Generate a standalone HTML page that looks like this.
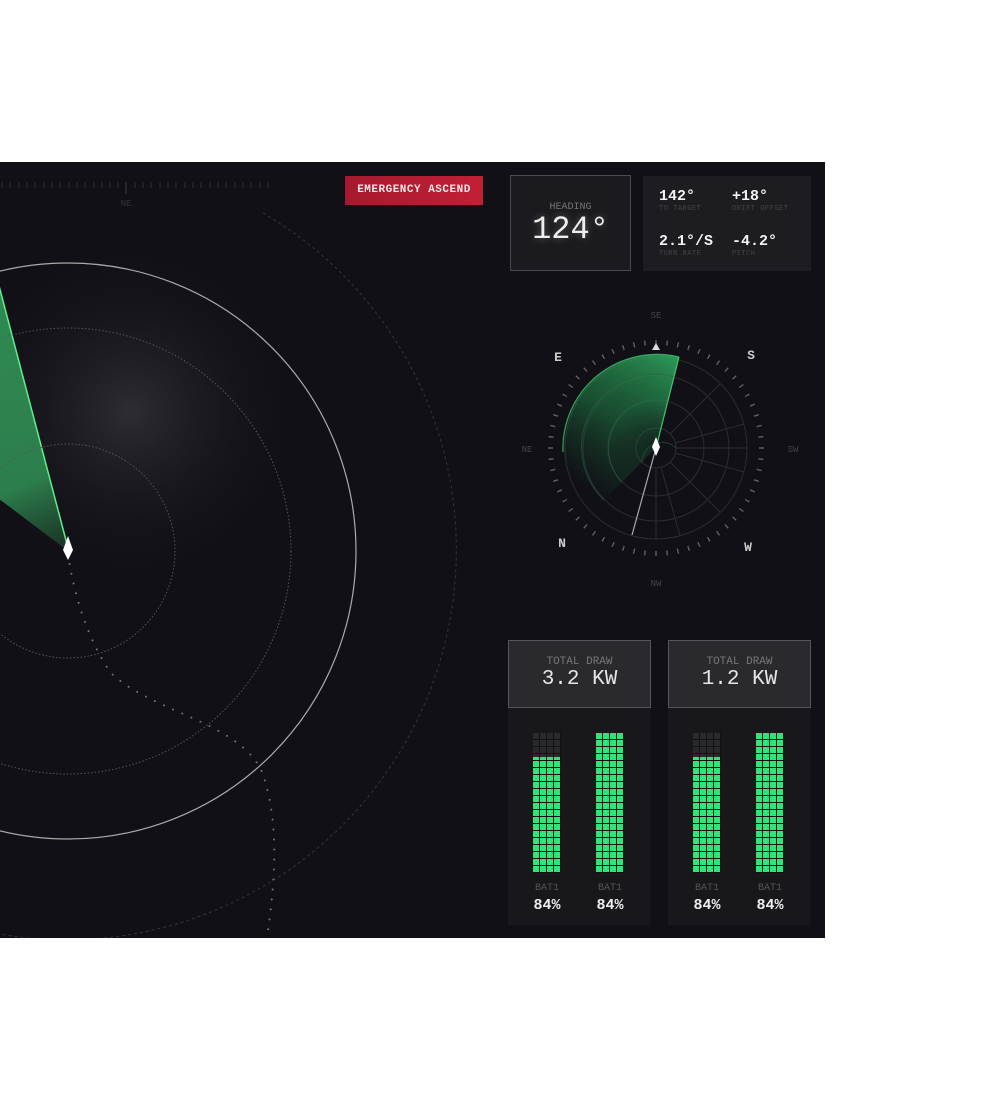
<!DOCTYPE html>
<html><head><meta charset="utf-8"><style>
body{margin:0;width:996px;height:1100px;background:#fff;position:relative;overflow:hidden;font-family:"Liberation Mono",monospace;}
#p{position:absolute;left:0;top:162px;width:825px;height:776px;background:#111016;overflow:hidden}
.abs{position:absolute}
.btn{left:345px;top:14px;width:138px;height:29px;background:linear-gradient(90deg,#a51a2e,#c21f35);color:#f3e6e8;font-size:11px;font-weight:bold;line-height:29px;text-align:center;letter-spacing:0.5px}
.hd{left:510px;top:13px;width:119px;height:94px;border:1px solid #4a4a50;background:#1b1b1f;text-align:center;color:#eee}
.st{left:643px;top:14px;width:168px;height:95px;background:#1d1d21}
.v{color:#f2f2f2;font-size:15px;font-weight:bold}
.l{color:#444;font-size:7px;letter-spacing:.5px}
.card{top:478px;width:143px;height:285px;background:#18181c}
.ch{position:absolute;left:0;top:0;width:141px;height:66px;border:1px solid #55555a;background:#2a2a2e;text-align:center}
.bar{position:absolute;width:28px;height:140px;top:93px;
background:
repeating-linear-gradient(90deg,transparent 0 6px,#111 6px 7px),
repeating-linear-gradient(180deg,transparent 0 6px,#111 6px 7px),
linear-gradient(180deg,#2a2a2e 0 24px,#2ee57a 24px);}
.bar.full{background:repeating-linear-gradient(90deg,transparent 0 6px,#111 6px 7px),repeating-linear-gradient(180deg,transparent 0 6px,#111 6px 7px),#2ee57a}
.bl{position:absolute;top:243px;width:40px;text-align:center;color:#555;font-size:10px}
.bp{position:absolute;top:257px;width:40px;text-align:center;color:#eee;font-size:15px;font-weight:bold}
</style></head><body>
<div id="p">
<svg class="abs" style="left:0;top:0" width="825" height="776">
<defs>
<radialGradient id="glow" cx="130" cy="250" r="180" gradientUnits="userSpaceOnUse"><stop offset="0" stop-color="#2e2d33"/><stop offset="1" stop-color="#111016" stop-opacity="0"/></radialGradient>
<linearGradient id="gw" x1="68" y1="389" x2="-40" y2="150" gradientUnits="userSpaceOnUse"><stop offset="0" stop-color="#2a7a48" stop-opacity="0.3"/><stop offset="0.3" stop-color="#2f8a52" stop-opacity="0.9"/><stop offset="1" stop-color="#2f8a52" stop-opacity="1"/></linearGradient>
<linearGradient id="gc" x1="700" y1="210" x2="600" y2="340" gradientUnits="userSpaceOnUse"><stop offset="0" stop-color="#2ea35c" stop-opacity="0.95"/><stop offset="0.55" stop-color="#207a44" stop-opacity="0.6"/><stop offset="1" stop-color="#1a5a34" stop-opacity="0"/></linearGradient>
<radialGradient id="cfade" cx="656" cy="286" r="94" gradientUnits="userSpaceOnUse"><stop offset="0" stop-color="#fff" stop-opacity="0.3"/><stop offset="0.5" stop-color="#fff" stop-opacity="0.9"/><stop offset="1" stop-color="#fff"/></radialGradient>
<mask id="cm"><rect x="500" y="150" width="320" height="300" fill="url(#cfade)"/></mask>
</defs>
<ellipse cx="150" cy="260" rx="190" ry="170" fill="url(#glow)"/>
<path d="M68 389 L-10 90 L-10 330 Z" fill="url(#gw)"/>
<line x1="68" y1="386" x2="-2" y2="120" stroke="#5cf08e" stroke-width="1.5"/>
<circle cx="68" cy="389" r="107" fill="none" stroke="#555" stroke-dasharray="1.5 2"/>
<circle cx="68" cy="389" r="223" fill="none" stroke="#555" stroke-dasharray="1.5 2"/>
<circle cx="68" cy="389" r="288" fill="none" stroke="#aaa" stroke-width="1.2"/>
<path d="M263 51 A390 390 0 0 1 -65 755" fill="none" stroke="#34343a" stroke-dasharray="3 3"/>
<path d="M68 392 C75 440 90 480 110 510 C150 550 240 560 262 610 C280 660 275 720 267 776" fill="none" stroke="#777" stroke-width="2" stroke-linecap="round" stroke-dasharray="0 10"/>
<path d="M68 374 L73 388 L68 398 L63 388 Z" fill="#fff"/>
<g stroke="#2e2e34" stroke-width="1">
<path d="M2 20v6M10 20v6M19 20v6M27 20v6M35 20v6M44 20v6M52 20v6M60 20v6M69 20v6M77 20v6M85 20v6M94 20v6M102 20v6M110 20v6M118 20v6M135 20v6M143 20v6M151 20v6M160 20v6M168 20v6M176 20v6M185 20v6M193 20v6M201 20v6M210 20v6M218 20v6M226 20v6M235 20v6M243 20v6M251 20v6M260 20v6M268 20v6"/>
<path d="M126 20v12" stroke="#3a3a40"/>
</g>
<text x="126" y="44" fill="#333" font-size="9" text-anchor="middle" font-family="Liberation Mono">NE</text>
<g transform="translate(656,286)">
<g fill="none" stroke="#2c2c30" stroke-width="1">
<circle r="20"/><circle r="48"/><circle r="73"/><circle r="91"/>
<path d="M20 0H91M0 20V91M14 14L64 64M14 -14L64 -64M19 5L88 24M19 -5L88 -24M5 19L24 88"/>
</g>
</g>
<path d="M656 286 L679 195 A94 94 0 0 0 590 352 Z" fill="url(#gc)" mask="url(#cm)"/>
<path d="M679 195 A94 94 0 0 0 563 290" fill="none" stroke="#3ec46e" stroke-width="1.2" opacity="0.8"/>
<line x1="656" y1="286" x2="679" y2="195" stroke="#3ec46e" stroke-width="1.2"/>
<g transform="translate(656,286)">
<g fill="none" stroke="#2a6040" stroke-width="1" opacity="0.6"><path d="M20 -0A20 20 0 0 0 -14 14M12 -46A48 48 0 0 0 -34 34M18 -71A73 73 0 0 0 -52 52"/></g>
<g id="tk" stroke="#666" stroke-width="1.3"></g>
<line x1="0" y1="0" x2="-24" y2="87" stroke="#aaa" stroke-width="1.2"/>
<path d="M0 -11 L4 -1 L0 8 L-4 -1 Z" fill="#fff"/>
<path d="M0 -105 L4 -98 L-4 -98 Z" fill="#ddd"/>
</g>
<g font-family="Liberation Mono" text-anchor="middle">
<text x="656" y="156" fill="#444" font-size="9">SE</text>
<text x="656" y="424" fill="#444" font-size="9">NW</text>
<text x="527" y="290" fill="#444" font-size="9">NE</text>
<text x="793" y="290" fill="#444" font-size="9">SW</text>
<text x="558" y="199" fill="#ccc" font-size="13" font-weight="bold">E</text>
<text x="751" y="197" fill="#ccc" font-size="13" font-weight="bold">S</text>
<text x="562" y="385" fill="#ccc" font-size="13" font-weight="bold">N</text>
<text x="748" y="389" fill="#ccc" font-size="13" font-weight="bold">W</text>
</g>
</svg>
<div class="abs btn">EMERGENCY ASCEND</div>
<div class="abs hd"><div style="margin-top:26px;font-size:10px;color:#777">HEADING</div><div style="font-size:32px;line-height:34px;text-shadow:0 0 8px rgba(255,255,255,.3)">124°</div></div>
<div class="abs st">
<div class="abs" style="left:16px;top:12px"><div class="v">142°</div><div class="l">TO TARGET</div></div>
<div class="abs" style="left:89px;top:12px"><div class="v">+18°</div><div class="l">DRIFT OFFSET</div></div>
<div class="abs" style="left:16px;top:57px"><div class="v">2.1°/S</div><div class="l">TURN RATE</div></div>
<div class="abs" style="left:89px;top:57px"><div class="v">-4.2°</div><div class="l">PITCH</div></div>
</div>
<div class="abs card" style="left:508px"><div class="ch"><div style="margin-top:15px;color:#777;font-size:11px">TOTAL DRAW</div><div style="color:#e6e6e6;font-size:21px">3.2 KW</div></div>
<div class="bar" style="left:25px"></div><div class="bar full" style="left:88px"></div>
<div class="bl" style="left:19px">BAT1</div><div class="bl" style="left:82px">BAT1</div>
<div class="bp" style="left:19px">84%</div><div class="bp" style="left:82px">84%</div></div>
<div class="abs card" style="left:668px"><div class="ch"><div style="margin-top:15px;color:#777;font-size:11px">TOTAL DRAW</div><div style="color:#e6e6e6;font-size:21px">1.2 KW</div></div>
<div class="bar" style="left:25px"></div><div class="bar full" style="left:88px"></div>
<div class="bl" style="left:19px">BAT1</div><div class="bl" style="left:82px">BAT1</div>
<div class="bp" style="left:19px">84%</div><div class="bp" style="left:82px">84%</div></div>
</div>
<script>
var g=document.getElementById('tk'),s='';
for(var i=0;i<60;i++){var a=i*6*Math.PI/180,r1=103,r2=108;
s+='<line x1="'+(Math.sin(a)*r1).toFixed(1)+'" y1="'+(-Math.cos(a)*r1).toFixed(1)+'" x2="'+(Math.sin(a)*r2).toFixed(1)+'" y2="'+(-Math.cos(a)*r2).toFixed(1)+'"/>';}
g.innerHTML=s;
</script>
</body></html>
